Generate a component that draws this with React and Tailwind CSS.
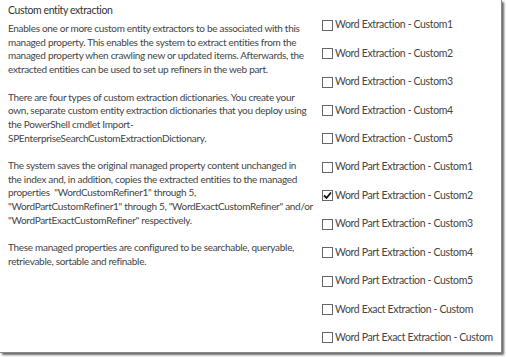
const paragraphs = [
  [
    'Enables one or more custom entity extractors to be associated with this',
    'managed property. This enables the system to extract entities from the',
    'managed property when crawling new or updated items. Afterwards, the',
    'extracted entities can be used to set up refiners in the web part.',
  ],
  [
    'There are four types of custom extraction dictionaries. You create your',
    'own, separate custom entity extraction dictionaries that you deploy using',
    'the PowerShell cmdlet Import-',
    'SPEnterpriseSearchCustomExtractionDictionary.',
  ],
  [
    'The system saves the original managed property content unchanged in',
    'the index and, in addition, copies the extracted entities to the managed',
    'properties  "WordCustomRefiner1" through 5,',
    '"WordPartCustomRefiner1" through 5, "WordExactCustomRefiner" and/or',
    '"WordPartExactCustomRefiner" respectively.',
  ],
  [
    'These managed properties are configured to be searchable, queryable,',
    'retrievable, sortable and refinable.',
  ],
]

const options = [
  { label: 'Word Extraction - Custom1' },
  { label: 'Word Extraction - Custom2' },
  { label: 'Word Extraction - Custom3' },
  { label: 'Word Extraction - Custom4' },
  { label: 'Word Extraction - Custom5' },
  { label: 'Word Part Extraction - Custom1' },
  { label: 'Word Part Extraction - Custom2', checked: true },
  { label: 'Word Part Extraction - Custom3' },
  { label: 'Word Part Extraction - Custom4' },
  { label: 'Word Part Extraction - Custom5' },
  { label: 'Word Exact Extraction - Custom' },
  { label: 'Word Part Exact Extraction - Custom' },
]

export default function App() {
  return (
    <div className="w-[506px] h-[357px] bg-white font-['Lato',sans-serif]">
      <div className="w-[502px] h-[353px] bg-white border-r border-b border-[#8a8a8a] shadow-[2px_2px_2px_rgba(0,0,0,0.6)] flex">
        <div className="w-[313px] pl-[8px] pt-[2px]">
          <h2 className="text-[10.5px] leading-[16px] tracking-[-0.4px] text-[#333]">Custom entity extraction</h2>
          <div className="mt-[4px] space-y-[13.7px]">
            {paragraphs.map((lines, i) => (
              <p key={i} className="text-[10px] leading-[13.7px] tracking-[-0.3px] text-[#444] whitespace-pre">
                {lines.map((line, j) => (
                  <span key={j} className="block">{line}</span>
                ))}
              </p>
            ))}
          </div>
        </div>
        <div className="pt-[11px] pl-[9px] flex flex-col">
          {options.map((option) => (
            <label key={option.label} className="h-[28.7px] flex items-center gap-[2px] text-[10.5px] tracking-[-0.35px] text-[#444] whitespace-nowrap">
              <Checkbox checked={option.checked} />
              <span>{option.label}</span>
            </label>
          ))}
        </div>
      </div>
    </div>
  )
}

function Checkbox({ checked }) {
  return (
    <span className="w-[11px] h-[11px] border border-[#666] bg-white flex items-center justify-center shrink-0">
      {checked ? (
        <svg width="9" height="9" viewBox="0 0 9 9">
          <path d="M1 4.5 L3.5 7 L8 1.5" fill="none" stroke="#111" strokeWidth="1.8" />
        </svg>
      ) : null}
    </span>
  )
}
